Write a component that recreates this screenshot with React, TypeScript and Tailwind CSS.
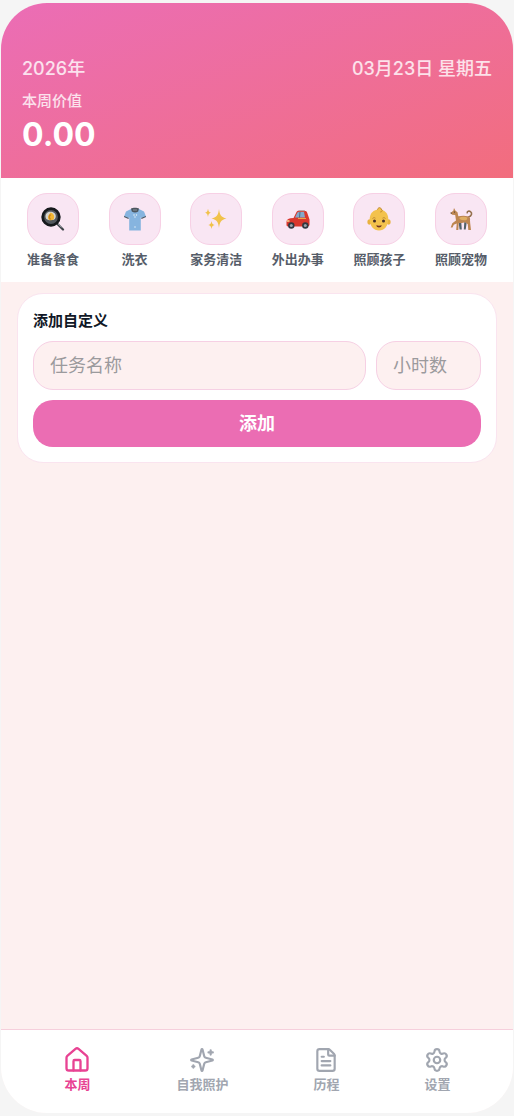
import { useState, type ReactNode } from "react";
import { FileText, House, Settings, type LucideIcon } from "lucide-react";

const FONT = "font-['Inter','Noto_Sans_CJK_SC',sans-serif]";

function PanIcon() {
  return (
    <svg viewBox="0 0 24 24" className="size-6" aria-hidden="true">
      <path d="M16 16.500l6 6" stroke="#3d4247" strokeWidth="2.200" strokeLinecap="round" />
      <path d="M17 17l3.500 3.500" stroke="#8b949b" strokeWidth="1" />
      <circle cx="10" cy="10" r="8.300" fill="#53585d" stroke="#16191c" strokeWidth="2.800" />
      <path d="M4.500 9.500c0-2.800 2.200-4.800 5-4.800 3 0 5.300 1.500 5.300 4.500 0 2.300-1.500 4-3.500 3.800-1.500-.2-2 .5-3.800 0-1.800-.3-3-1.500-3-3.500z" fill="#d5d4cf" />
      <path d="M9.500 5.500c2 .4 3.700 2 3.700 4.500 0 2.200-1.500 3.500-3.500 3.300-2 0-3-1.300-2.700-3.300.2-1.800 1.500-2.500 2.500-4.500z" fill="#f2b632" />
      <path d="M9.500 7.500c-1.500 1.500-1.500 3.500 0 5" stroke="#c78222" strokeWidth="1.500" fill="none" />
    </svg>
  );
}

function ShirtIcon() {
  return (
    <svg viewBox="0 0 24 24" className="size-6" aria-hidden="true">
      <path d="M8 2L3 4.500 1 9.500l4.500 1.800.7-1.300v13.500h11.600V10l.7 1.300L23 9.500l-2-5L16 2z" fill="#86b4df" />
      <path d="M1.200 9l4.600 1.900-.4 1L.9 10zM22.800 9l-4.600 1.900.4 1 4.500-1.900z" fill="#4c565f" />
      <path d="M8 1.500c1.500-1 6.500-1 8 0l-.8 3c-1.800 1.200-4.600 1.200-6.400 0z" fill="#4c565f" />
      <path d="M10 3h4" stroke="#89949c" strokeWidth="1" />
      <circle cx="11" cy="8" r=".7" fill="#eef5fb" />
      <circle cx="13.500" cy="8" r=".7" fill="#eef5fb" />
      <circle cx="12" cy="10" r=".7" fill="#eef5fb" />
      <circle cx="12" cy="20" r=".7" fill="#eef5fb" />
    </svg>
  );
}

function ShineIcon() {
  return (
    <svg viewBox="0 0 24 24" className="size-6" fill="#f1c24a" aria-hidden="true">
      <path d="M15 2c.7 6 2 8 7.500 9.500C17 13 15.700 15 15 21c-.7-6-2-8-7.500-9.500C13 10 14.300 8 15 2z" />
      <path d="M4 1.500c.4 2.700 1 3.600 3 4.200-2 .6-2.600 1.500-3 4.300-.4-2.800-1-3.700-3-4.300 2-.6 2.600-1.500 3-4.200z" />
      <path d="M7.500 14c.4 2.500 1 3.400 3.200 4-2.200.6-2.800 1.500-3.200 4-.4-2.500-1-3.400-3.200-4 2.200-.6 2.800-1.500 3.200-4z" />
    </svg>
  );
}

function CarIcon() {
  return (
    <svg viewBox="0 0 24 24" className="size-6" aria-hidden="true">
      <path d="M7.500 11L10.500 5c.5-.9 1.200-1.300 2.500-1.300h5.500c1.500 0 2.300.8 2.800 2.200l2.200 6.500v5c0 1.300-.8 2-2 2H2c-1 0-1.500-.7-1.500-1.700v-2.800c0-2 1.500-3.400 4-3.700z" fill="#d9382d" />
      <path d="M9 10.500l2.300-4.700c.3-.6.800-.8 1.500-.8h5.200l1 5.500z" fill="#83a9c9" />
      <path d="M14 5l-.5 5.500" stroke="#425a70" strokeWidth=".8" />
      <path d="M12.500 3.800h6.300" stroke="#a9a2a2" strokeWidth="1" />
      <path d="M12 11.500h8" stroke="#eda443" strokeWidth="1" />
      <path d="M1 14h2.500" stroke="#f5d890" strokeWidth="1.300" />
      <circle cx="5.300" cy="18.500" r="3.200" fill="#303941" />
      <circle cx="5.300" cy="18.500" r="1.500" fill="#9ba3aa" />
      <circle cx="19.300" cy="18.500" r="3.200" fill="#303941" />
      <circle cx="19.300" cy="18.500" r="1.500" fill="#9ba3aa" />
    </svg>
  );
}

function BabyIcon() {
  return (
    <svg viewBox="0 0 24 24" className="size-6" aria-hidden="true">
      <ellipse cx="2.300" cy="15" rx="2" ry="2.700" fill="#e9b13e" />
      <ellipse cx="21.700" cy="15" rx="2" ry="2.700" fill="#e9b13e" />
      <path d="M12 2.500c5.500 0 9.300 4 9.300 9.500 0 7-4 11.500-9.300 11.500S2.700 19 2.700 12c0-5.500 3.800-9.500 9.300-9.500z" fill="#f3c24c" />
      <path d="M10.500 2.700c.3-2.500 3.700-2.700 3.500-.5 2 .5 1.500 2.800-.8 2.800" fill="#f3c24c" stroke="#c28a2d" strokeWidth="1" />
      <path d="M5.500 11.500c1-1 2.200-1 3-.3M15.500 11.200c1-.7 2-.7 3 .3" stroke="#b58332" strokeWidth=".9" fill="none" />
      <circle cx="7.500" cy="14" r="1.500" fill="#473028" />
      <circle cx="16.500" cy="14" r="1.500" fill="#473028" />
      <path d="M9.300 18.200c1.500.6 3.900.6 5.400 0-.3 3-5.100 3-5.400 0z" fill="#713323" />
    </svg>
  );
}

function PetIcon() {
  return (
    <svg viewBox="0 0 24 24" className="size-6" aria-hidden="true">
      <path d="M19.500 10c3.200-.8 4-4 2-5.400-1.500-1-3.500-.3-3.300 1.200" fill="none" stroke="#94704d" strokeWidth="1.600" strokeLinecap="round" />
      <path d="M9.500 14.500h2.700l.6 8h-2.200zM15.300 15l2.400.5-1 7h-1.900z" fill="#526169" />
      <path d="M5 1l1.500 2.700 2 1.600.8 4c3.200-.8 7.200-.8 10.200.2 1.500.7 1.900 2.200 1.500 3.700l.2 3 .8 6.800h-2.700l-.5-5.800-2.300-2-3.800.7-3 .2-.4 6.900H7.200l.5-6.500-2.900 1.300-1.300 2.600H1.700l1.600-4.200 3.700-2.700-.8-5.400-3-.4L1.500 6l2.800-2.200z" fill="#bd8651" />
      <path d="M10.500 10.500c3-1 6-.8 8 .2l-1 2.300c-2.500.5-5 .2-7-1z" fill="#dfae62" />
      <circle cx="5.500" cy="5" r=".6" fill="#39302a" />
      <path d="M1.600 6l1.200.2" stroke="#39302a" strokeWidth=".9" />
    </svg>
  );
}

const CHORES: { label: string; icon: ReactNode }[] = [
  { label: "准备餐食", icon: <PanIcon /> },
  { label: "洗衣", icon: <ShirtIcon /> },
  { label: "家务清洁", icon: <ShineIcon /> },
  { label: "外出办事", icon: <CarIcon /> },
  { label: "照顾孩子", icon: <BabyIcon /> },
  { label: "照顾宠物", icon: <PetIcon /> },
];

function CareIcon({ size = 24 }: { size?: number | string }) {
  return (
    <svg width={size} height={size} viewBox="0 0 24 24" fill="none" stroke="currentColor" strokeWidth="2" strokeLinecap="round" strokeLinejoin="round" aria-hidden="true">
      <path d="M9.937 15.500A2 2 0 0 0 8.500 14.063l-6.135-1.582a.5.5 0 0 1 0-.962L8.500 9.936A2 2 0 0 0 9.937 8.500l1.582-6.135a.5.5 0 0 1 .963 0L14.063 8.500A2 2 0 0 0 15.500 9.937l6.135 1.581a.5.5 0 0 1 0 .964L15.500 14.063a2 2 0 0 0-1.437 1.437l-1.582 6.135a.5.5 0 0 1-.963 0z" />
      <path d="M20 3v4M22 5h-4M4 17v2M5 18H3" />
    </svg>
  );
}

const TABS: { label: string; icon: LucideIcon | typeof CareIcon }[] = [
  { label: "本周", icon: House },
  { label: "自我照护", icon: CareIcon },
  { label: "历程", icon: FileText },
  { label: "设置", icon: Settings },
];

export default function App() {
  const [tab, setTab] = useState("本周");

  return (
    <div className={`min-h-screen flex flex-col bg-[#f5f5f5] px-px py-[3px] ${FONT}`}>
      <div className="flex flex-1 flex-col overflow-hidden rounded-[46px] bg-[#fdf0f0]">
        {/* Header */}
        <header className="bg-linear-160 from-[#eb6db6] to-[#f26d7d] px-[21px] pt-[52px] pb-6 text-white">
          <div className="flex items-center justify-between text-lg leading-7 font-medium text-white/80">
            <span>2026年</span>
            <span>03月23日 星期五</span>
          </div>
          <p className="mt-2 text-[15px] leading-5 font-medium text-white/80">本周价值</p>
          <p className="mt-1 text-[32px] leading-[39px] font-bold">0.00</p>
        </header>

        {/* Quick chores */}
        <section className="flex justify-between bg-white px-[26px] pt-[15px] pb-[13px]">
          {CHORES.map((chore) => (
            <button key={chore.label} type="button" className="flex w-[52px] flex-col items-center gap-1">
              <span className="flex size-[52px] items-center justify-center rounded-[20px] border border-[#f7d0e5] bg-[#f9e6f3]">
                {chore.icon}
              </span>
              <span className="text-[13px] leading-5 font-bold whitespace-nowrap text-[#565d69]">{chore.label}</span>
            </button>
          ))}
        </section>

        {/* Custom task */}
        <main className="flex-1 px-4 py-[11px]">
          <form
            className="rounded-[26px] border border-[#fae4ef] bg-white p-[15px]"
            onSubmit={(e) => e.preventDefault()}
          >
            <h2 className="mb-2 text-[15px] leading-6 font-bold text-[#111827]">添加自定义</h2>
            <div className="mb-[10px] flex gap-[10px]">
              <input
                type="text"
                aria-label="任务名称"
                placeholder="任务名称"
                className="h-[49px] min-w-0 flex-1 rounded-[20px] border border-[#f6d0e4] bg-[#fdf0f0] px-4 text-lg outline-none placeholder:text-[#9b9a9d]"
              />
              <input
                type="text"
                inputMode="decimal"
                aria-label="小时数"
                placeholder="小时数"
                className="h-[49px] w-[105px] rounded-[20px] border border-[#f6d0e4] bg-[#fdf0f0] px-4 text-lg outline-none placeholder:text-[#9b9a9d]"
              />
            </div>
            <button type="submit" className="h-[47px] w-full rounded-[20px] bg-[#eb6db3] text-lg font-bold text-white">
              添加
            </button>
          </form>
        </main>

        {/* Bottom tabs */}
        <nav className="flex justify-around border-t border-[#f6cfdc] bg-white px-5 pt-4 pb-[19px]">
          {TABS.map(({ label, icon: Icon }) => {
            const active = tab === label;
            return (
              <button
                key={label}
                type="button"
                onClick={() => setTab(label)}
                className={`flex flex-col items-center text-[13px] leading-5 font-bold ${active ? "text-[#e84393]" : "text-[#a1a6b0]"}`}
              >
                <span className="flex h-7 items-center">
                  <Icon size={active ? 28 : 26} />
                </span>
                {label}
              </button>
            );
          })}
        </nav>
      </div>
    </div>
  );
}
